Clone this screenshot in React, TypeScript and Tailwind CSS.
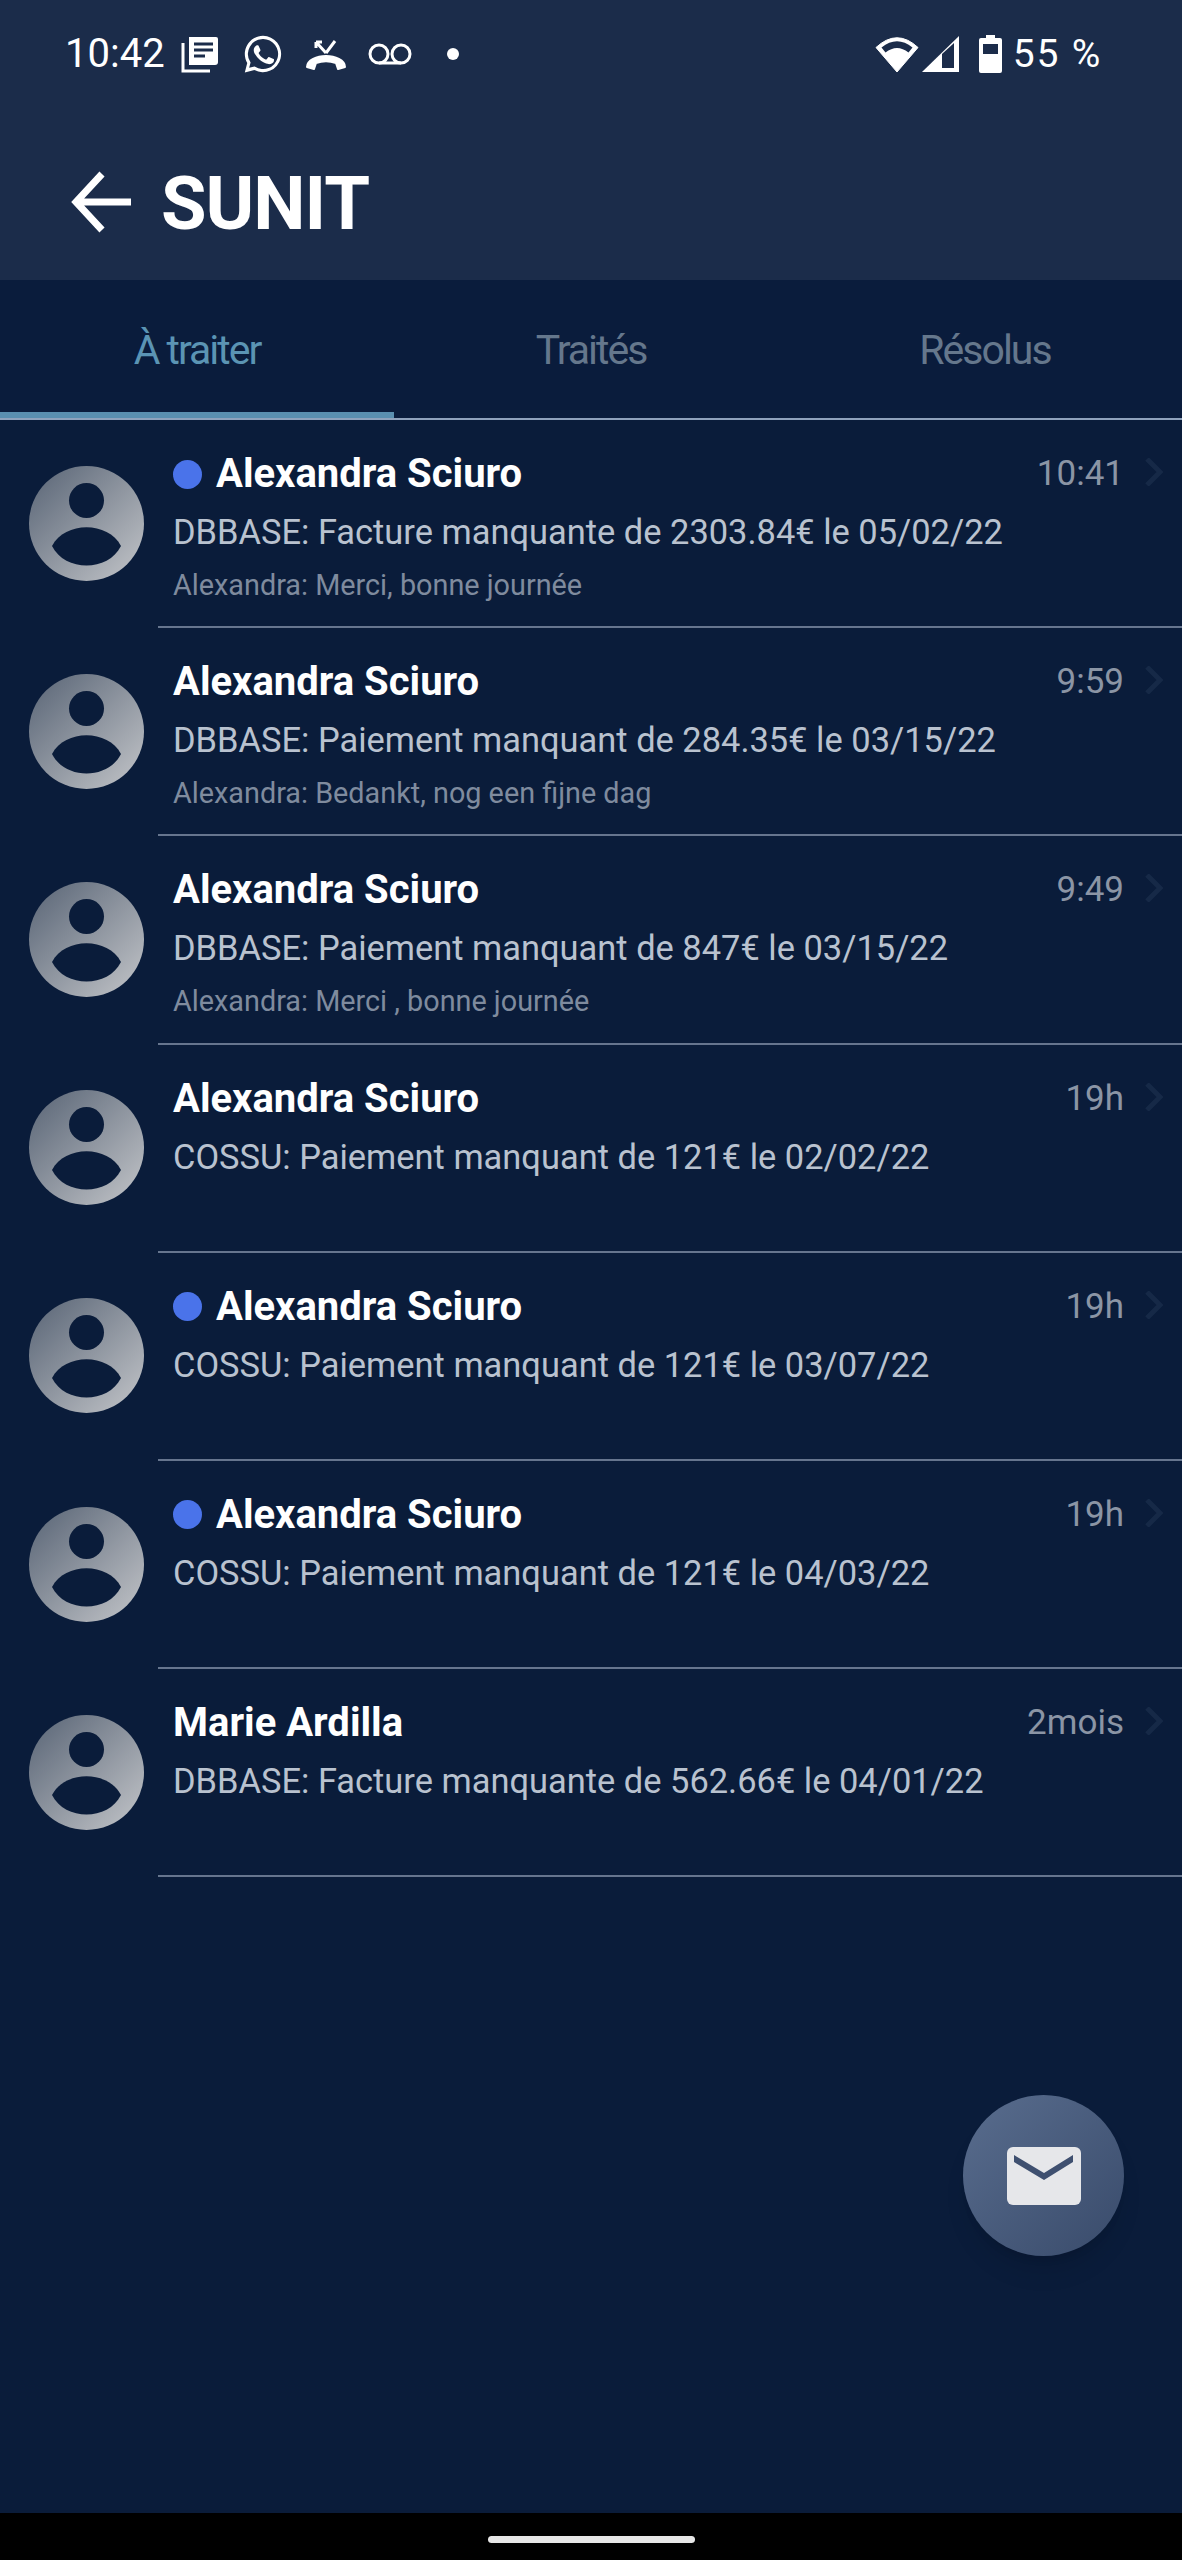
const rows = [
  { dot: true, name: "Alexandra Sciuro", time: "10:41", sub: "DBBASE: Facture manquante de 2303.84€ le 05/02/22", msg: "Alexandra: Merci, bonne journée" },
  { dot: false, name: "Alexandra Sciuro", time: "9:59", sub: "DBBASE: Paiement manquant de 284.35€ le 03/15/22", msg: "Alexandra: Bedankt, nog een fijne dag" },
  { dot: false, name: "Alexandra Sciuro", time: "9:49", sub: "DBBASE: Paiement manquant de 847€ le 03/15/22", msg: "Alexandra: Merci , bonne journée" },
  { dot: false, name: "Alexandra Sciuro", time: "19h", sub: "COSSU: Paiement manquant de 121€ le 02/02/22", msg: "" },
  { dot: true, name: "Alexandra Sciuro", time: "19h", sub: "COSSU: Paiement manquant de 121€ le 03/07/22", msg: "" },
  { dot: true, name: "Alexandra Sciuro", time: "19h", sub: "COSSU: Paiement manquant de 121€ le 04/03/22", msg: "" },
  { dot: false, name: "Marie Ardilla", time: "2mois", sub: "DBBASE: Facture manquante de 562.66€ le 04/01/22", msg: "" },
];

function Avatar({ id }: { id: number }) {
  return (
    <svg width="115" height="115" viewBox="0 0 115 115" className="shrink-0 -mt-[2px]">
      <defs>
        <linearGradient id={`av${id}`} x1="0.1" y1="0.1" x2="0.9" y2="0.9">
          <stop offset="0" stopColor="#626d7d" />
          <stop offset="1" stopColor="#b9bcc1" />
        </linearGradient>
      </defs>
      <circle cx="57.5" cy="57.5" r="57.5" fill={`url(#av${id})`} />
      <circle cx="57.5" cy="34.5" r="17.5" fill="#0a1c3a" />
      <path d="M23 80C36 55 79 55 92 80C79 106 36 106 23 80Z" fill="#0a1c3a" />
    </svg>
  );
}

function StatusLeft() {
  return (
    <div className="flex items-center text-white">
      <span className="text-[40px] leading-none font-normal w-[116px]">10:42</span>
      <svg width="38" height="38" viewBox="0 0 38 38" fill="none">
        <path d="M8 2H35a2 2 0 0 1 2 2V27a3 3 0 0 1-3 3H8Z" fill="#fff" />
        <path d="M2 8V36H29" stroke="#fff" strokeWidth="3" />
        <path d="M13 9H32M13 15H32M13 21H24" stroke="#1b2c4a" strokeWidth="3" />
      </svg>
      <svg width="42" height="42" viewBox="0 0 24 24" fill="#fff" className="ml-[23px]">
        <path d="M12 1.6A10.4 10.4 0 0 0 3 17.2L1.6 22.6l5.5-1.4A10.4 10.4 0 1 0 12 1.6Zm0 1.8a8.6 8.6 0 1 1-4.5 15.9l-.4-.2-3 .8.8-3-.2-.4A8.6 8.6 0 0 1 12 3.4Z" />
        <path d="M8.6 7c-.3 0-.6.1-.9.5-.4.4-1 1-1 2.300s1 2.700 1.200 2.900c.1.2 2 3.100 4.900 4.300 2.400 1 2.900.8 3.400.7.500 0 1.700-.7 1.900-1.300.2-.7.2-1.200.2-1.300-.1-.2-.3-.2-.6-.4l-2-.9c-.3-.1-.5-.2-.7.1l-.9 1.100c-.2.200-.3.200-.6.100-.3-.2-1.200-.5-2.300-1.400-.900-.8-1.400-1.700-1.600-2-.2-.3 0-.5.100-.6l.8-1c.100-.2 0-.4 0-.5l-.9-2.100C9.300 7 9 7 8.600 7Z" />
      </svg>
      <svg width="44" height="32" viewBox="0 0 44 32" fill="none" className="ml-[20px]">
        <path d="M3 29C3 22 13 18 22 18S41 22 41 29L34 31L32 25C26 23 18 23 12 25L10 31Z" fill="#fff" stroke="#fff" strokeWidth="2" strokeLinejoin="round" />
        <path d="M22 15L12 4M12 4V10M12 4H18M22 15L31 3" stroke="#fff" strokeWidth="3" />
      </svg>
      <svg width="44" height="22" viewBox="0 0 44 22" fill="none" className="ml-[20px]">
        <circle cx="11" cy="11" r="9" stroke="#fff" strokeWidth="3" />
        <circle cx="33" cy="11" r="9" stroke="#fff" strokeWidth="3" />
        <path d="M11 20H33" stroke="#fff" strokeWidth="3" />
      </svg>
      <span className="ml-[35px] w-[12px] h-[12px] rounded-full bg-white" />
    </div>
  );
}

function StatusRight() {
  return (
    <div className="flex items-center text-white">
      <svg width="44" height="38" viewBox="0 0 44 38">
        <path d="M22 37L1 12.500Q22 -7 43 12.500Z" fill="#fff" stroke="#fff" strokeWidth="1" strokeLinejoin="round" />
        <path d="M6.500 12.500Q22 0 37.500 12.500L33.500 17.500Q22 8.500 10.500 17.500Z" fill="#1b2c4a" />
      </svg>
      <svg width="37" height="36" viewBox="0 0 37 36" className="ml-[3px]" fill="none">
        <path d="M0 36L37 0V36Z" fill="#fff" />
        <path d="M20 32V18L32 7V32Z" fill="#1b2c4a" />
      </svg>
      <svg width="23" height="38" viewBox="0 0 23 38" className="ml-[20px]">
        <path d="M7 0H16V3H21a2 2 0 0 1 2 2V36a2 2 0 0 1-2 2H2a2 2 0 0 1-2-2V5a2 2 0 0 1 2-2H7Z" fill="#fff" />
        <rect x="4" y="9" width="15" height="10" fill="#1b2c4a" />
      </svg>
      <span className="ml-[11px] text-[39px] leading-none whitespace-nowrap tracking-[1.8px]">55 %</span>
    </div>
  );
}

export default function App() {
  return (
    <div className="relative w-[1182px] h-[2560px] flex flex-col bg-[#0a1c3a] overflow-hidden" style={{ fontFamily: "Roboto, sans-serif" }}>
      <header className="h-[280px] shrink-0 bg-[#1b2c4a] flex flex-col">
        <div className="flex items-center justify-between pl-[65px] pr-[80px] pt-[33px] h-[75px]">
          <StatusLeft />
          <StatusRight />
        </div>
        <div className="flex items-center pl-[70px] mt-[75px]">
          <svg width="64" height="62" viewBox="0 0 64 62" fill="none" stroke="#fff" strokeWidth="7">
            <path d="M61 31H6M32 3L6 31L32 59" />
          </svg>
          <h1 className="ml-[27px] mt-[4px] text-[74px] leading-[100px] font-bold text-white tracking-[-1px]">SUNIT</h1>
        </div>
      </header>
      <nav className="h-[140px] shrink-0 flex bg-[#0a1c3c] border-b-2 border-[#8fa2bc] relative">
        {["À traiter", "Traités", "Résolus"].map((t, i) => (
          <div key={t} className={`flex-1 flex items-center justify-center text-[41px] tracking-[-2px] pt-[10px] ${i === 0 ? "text-[#5b94b4] border-b-[6px] border-[#5a8fb0] pb-0" : "text-[#65778c] pb-[6px]"}`}>
            {t}
          </div>
        ))}
      </nav>
      <main className="flex-1 flex flex-col">
        {rows.map((r, i) => (
          <div key={i} className="h-[208.2px] flex items-center pl-[29px]">
            <Avatar id={i} />
            <div className="ml-[14px] flex-1 h-full border-b-2 border-[#66758e] pl-[15px] pt-[30px] relative">
              <div className="flex items-center h-[48px]">
                {r.dot && <span className="w-[29px] h-[29px] rounded-full bg-[#4a73ea] mr-[14px]" />}
                <span className="text-[40px] leading-[48px] font-bold text-white">{r.name}</span>
                <span className="ml-auto mr-[58px] text-[35px] leading-[48px] text-[#8b95a5]">{r.time}</span>
              </div>
              <div className="text-[34.45px] leading-[44px] mt-[12px] text-[#b9c2cf] whitespace-nowrap">{r.sub}</div>
              {r.msg && <div className="text-[28.8px] leading-[36px] mt-[13px] text-[#7f8b9e] whitespace-nowrap">{r.msg}</div>}
              <svg width="18" height="28" viewBox="0 0 18 28" fill="none" stroke="#162947" strokeWidth="5" className="absolute right-[19px] top-[38px]">
                <path d="M2 1L15 14L2 27" />
              </svg>
            </div>
          </div>
        ))}
      </main>
      <button className="absolute left-[963px] top-[2095px] w-[161px] h-[161px] rounded-full bg-gradient-to-br from-[#596d8e] to-[#394b6b] shadow-xl flex items-center justify-center">
        <svg width="74" height="58" viewBox="0 0 74 58">
          <rect width="74" height="58" rx="6" fill="#e6e7ea" />
          <path d="M7 8L37 26L66 8V15L37 33L7 15Z" fill="#3f5070" />
        </svg>
      </button>
      <footer className="h-[47px] shrink-0 bg-black flex items-center justify-center pt-[6px]">
        <div className="w-[207px] h-[7px] rounded-full bg-[#e6e6e6]" />
      </footer>
    </div>
  );
}
